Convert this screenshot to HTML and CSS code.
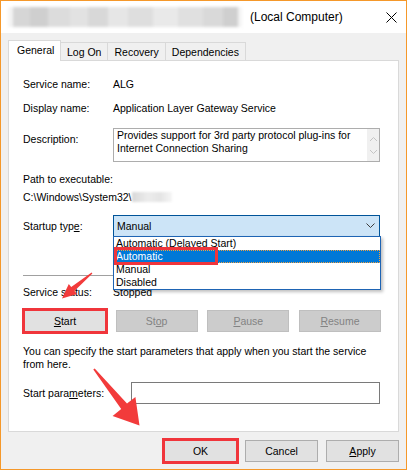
FILE: index.html
```html
<!DOCTYPE html>
<html lang="en">
<head>
  <meta charset="UTF-8" />
  <meta name="viewport" content="width=device-width, initial-scale=1.0"/>
  <title>ALG Properties (Local Computer)</title>
  <link rel="stylesheet" href="styles.css">
</head>
<body>
  <div class="window">
    <div class="titlebar">
      <span class="blurred-name"></span>
      <span class="title">(Local Computer)</span>
      <svg class="close" width="11" height="11" viewBox="0 0 11 11">
        <path d="M0.5 0.5 L10.5 10.5 M10.5 0.5 L0.5 10.5" stroke="#000" stroke-width="1" fill="none"/>
      </svg>
    </div>

    <div class="dialog">
      <div class="tabs">
        <div class="tab active">General</div>
        <div class="tab">Log On</div>
        <div class="tab">Recovery</div>
        <div class="tab">Dependencies</div>
      </div>

      <div class="panel">
        <div class="row first">
          <span class="label">Service name:</span>
          <span>ALG</span>
        </div>
        <div class="row gap10">
          <span class="label">Display name:</span>
          <span>Application Layer Gateway Service</span>
        </div>
        <div class="row desc-row">
          <span class="label desc-label">Description:</span>
          <div class="textbox">
            <div class="textbox-text">Provides support for 3rd party protocol plug-ins for<br>Internet Connection Sharing</div>
            <div class="scrollbar">
              <svg width="9" height="6" viewBox="0 0 9 6"><path d="M1 5 L4.5 1.5 L8 5" stroke="#c4c4c4" fill="none"/></svg>
              <svg width="9" height="6" viewBox="0 0 9 6"><path d="M1 1 L4.5 4.5 L8 1" stroke="#c4c4c4" fill="none"/></svg>
            </div>
          </div>
        </div>
        <div class="row gap10">Path to executable:</div>
        <div class="row gap4">C:\Windows\System32\<span class="blurred-path"></span></div>

        <div class="row startup-row">
          <span class="label startup-label">Startup typ<u>e</u>:</span>
          <div class="combo-wrap">
            <div class="combo">
              <span>Manual</span>
              <svg width="9" height="6" viewBox="0 0 9 6"><path d="M0.5 0.5 L4.5 4.5 L8.5 0.5" stroke="#3c3c3c" fill="none"/></svg>
            </div>
            <ul class="dropdown">
              <li>Automatic (Delayed Start)</li>
              <li class="selected">Automatic</li>
              <li>Manual</li>
              <li>Disabled</li>
              <span class="mark-box"></span>
            </ul>
          </div>
        </div>

        <div class="separator"></div>

        <div class="row status-row">
          <span class="label">Service status:</span>
          <span>Stopped</span>
        </div>

        <div class="service-buttons">
          <button class="btn marked"><u>S</u>tart</button>
          <button class="btn" disabled>St<u>o</u>p</button>
          <button class="btn" disabled><u>P</u>ause</button>
          <button class="btn" disabled><u>R</u>esume</button>
        </div>

        <p class="info">You can specify the start parameters that apply when you start the service<br>from here.</p>

        <div class="row params-row">
          <span class="label params-label">Start para<u>m</u>eters:</span>
          <div class="input"></div>
        </div>
      </div>

      <div class="footer">
        <button class="btn foot marked">OK</button>
        <button class="btn foot">Cancel</button>
        <button class="btn foot"><u>A</u>pply</button>
      </div>
    </div>
  </div>

  <!-- red callout arrows drawn over the dialog -->
  <svg class="arrows" width="410" height="473" viewBox="0 0 410 473">
    <polygon points="92.4,273.5 74.4,291 77,294 62,298.5 68.8,284 71.2,287.1 91.6,272.5" fill="#f23b3b"/>
    <polygon points="93.3,369.6 121.2,409 112.6,416 139.5,425.5 135.4,397 127,403.6 94.7,368.4" fill="#f23b3b"/>
  </svg>
</body>
</html>
```

FILE: styles.css
```css
body {
  margin: 0;
  background: #ffffff;
  font-family: "Liberation Sans", Arial, sans-serif;
  font-size: 10.5px;
  color: #000000;
  position: relative;
  width: 410px;
  height: 473px;
  overflow: hidden;
}

.window {
  width: 407px;
  height: 470px;
  box-sizing: border-box;
  border: 1px solid #f5982a;
  background: #f0f0f0;
}

/* title bar */
.titlebar {
  height: 32px;
  background: #ffffff;
  display: flex;
  align-items: center;
  padding-left: 7px;
}

.blurred-name {
  width: 234px;
  height: 20px;
  margin-right: 8px;
  background: linear-gradient(90deg, #f4f4f4 0 5px, #d6d6d6 5px 22px, #cfcfcf 22px 40px, #dcdcdc 40px 62px,
    #e2e2e2 62px 80px, #d8d8d8 80px 100px, #e6e6e6 100px 120px, #dedede 120px 145px, #e9e9e9 145px 170px,
    #e0e0e0 170px 195px, #d9d9d9 195px 215px, #cfcfcf 215px 230px, #f4f4f4 230px);
  filter: blur(1.5px);
}

.title {
  font-size: 12px;
}

.close {
  margin-left: auto;
  margin-right: 9px;
}

/* dialog body */
.dialog {
  padding: 7px 7px 0 7px;
}

.tabs {
  display: flex;
  align-items: flex-end;
  height: 20px;
}

.tab {
  height: 18px;
  line-height: 18px;
  padding: 0 6px;
  border: 1px solid #d9d9d9;
  border-bottom: none;
  border-left: none;
  background: #f0f0f0;
  box-sizing: border-box;
}

.tab.active {
  height: 21px;
  line-height: 19px;
  margin-bottom: -1px;
  padding: 0 8px 0 8px;
  background: #ffffff;
  border-left: 1px solid #d9d9d9;
  position: relative;
  z-index: 1;
  width: 53px;
}

.panel {
  background: #ffffff;
  border: 1px solid #d9d9d9;
  padding: 16px 17px 27px 14px;
}

.row {
  display: flex;
  line-height: 14px;
}

.gap10 { margin-top: 10px; }
.gap4 { margin-top: 4px; }

.label {
  width: 90px;
  flex-shrink: 0;
}

.desc-row { margin-top: 13px; }
.desc-label { padding-top: 4px; }

.textbox {
  width: 267px;
  height: 34px;
  box-sizing: border-box;
  border: 1px solid #adadad;
  display: flex;
}

.textbox-text {
  flex: 1;
  padding: 0 3px;
  line-height: 13px;
}

.scrollbar {
  width: 12px;
  background: #f0f0f0;
  display: flex;
  flex-direction: column;
  align-items: center;
  justify-content: space-around;
  padding: 3px 0;
}

.blurred-path {
  display: inline-block;
  width: 40px;
  height: 10px;
  margin-top: 2px;
  background: linear-gradient(90deg, #d8d8d8, #ececec 40%, #e4e4e4 70%, #f6f6f6);
  filter: blur(1px);
}

.startup-row { margin-top: 11px; }
.startup-label { padding-top: 4px; }

.combo-wrap {
  position: relative;
  width: 267px;
}

.combo {
  height: 22px;
  box-sizing: border-box;
  border: 1px solid #005499;
  background: #cce4f7;
  display: flex;
  align-items: center;
  justify-content: space-between;
  padding: 0 4px 0 3px;
}

.dropdown {
  position: absolute;
  top: 21px;
  left: 0;
  width: 268px;
  box-sizing: border-box;
  margin: 0;
  padding: 0;
  list-style: none;
  background: #ffffff;
  border: 1px solid #1e64b4;
  box-shadow: 2px 2px 3px rgba(0, 0, 0, 0.25);
  line-height: 13px;
  z-index: 2;
}

.dropdown li {
  padding-left: 2px;
  height: 13px;
}

.dropdown li.selected {
  background: #0078d7;
  color: #ffffff;
  outline: 1px dotted #f0a040;
  outline-offset: -1px;
}

.mark-box {
  position: absolute;
  left: 0;
  top: 10px;
  width: 104px;
  height: 18px;
  box-sizing: border-box;
  border: 3px solid #f0353b;
}

.separator {
  margin-top: 38px;
  height: 1px;
  background: #a0a0a0;
}

.status-row { margin-top: 9px; }

.service-buttons {
  display: flex;
  justify-content: space-between;
  margin: 11px 0 0 1px;
}

.btn {
  font-family: inherit;
  font-size: inherit;
  width: 82px;
  height: 22px;
  padding: 0;
  border: 1px solid #adadad;
  background: #e1e1e1;
  color: #000000;
}

.btn:disabled {
  background: #cccccc;
  border-color: #bfbfbf;
  color: #838383;
}

.btn.marked {
  outline: 3px solid #f0353b;
  outline-offset: -1px;
}

.info {
  margin: 13px 0 0 0;
  line-height: 13px;
}

.params-row { margin-top: 11px; }
.params-label {
  width: 108px;
  padding-top: 4px;
}

.input {
  width: 249px;
  height: 22px;
  box-sizing: border-box;
  border: 1px solid #7a7a7a;
}

.footer {
  display: flex;
  justify-content: flex-end;
  gap: 8px;
  margin-top: 8px;
}

.btn.foot {
  width: 73px;
}

.arrows {
  position: absolute;
  left: 0;
  top: 0;
  pointer-events: none;
}
```
